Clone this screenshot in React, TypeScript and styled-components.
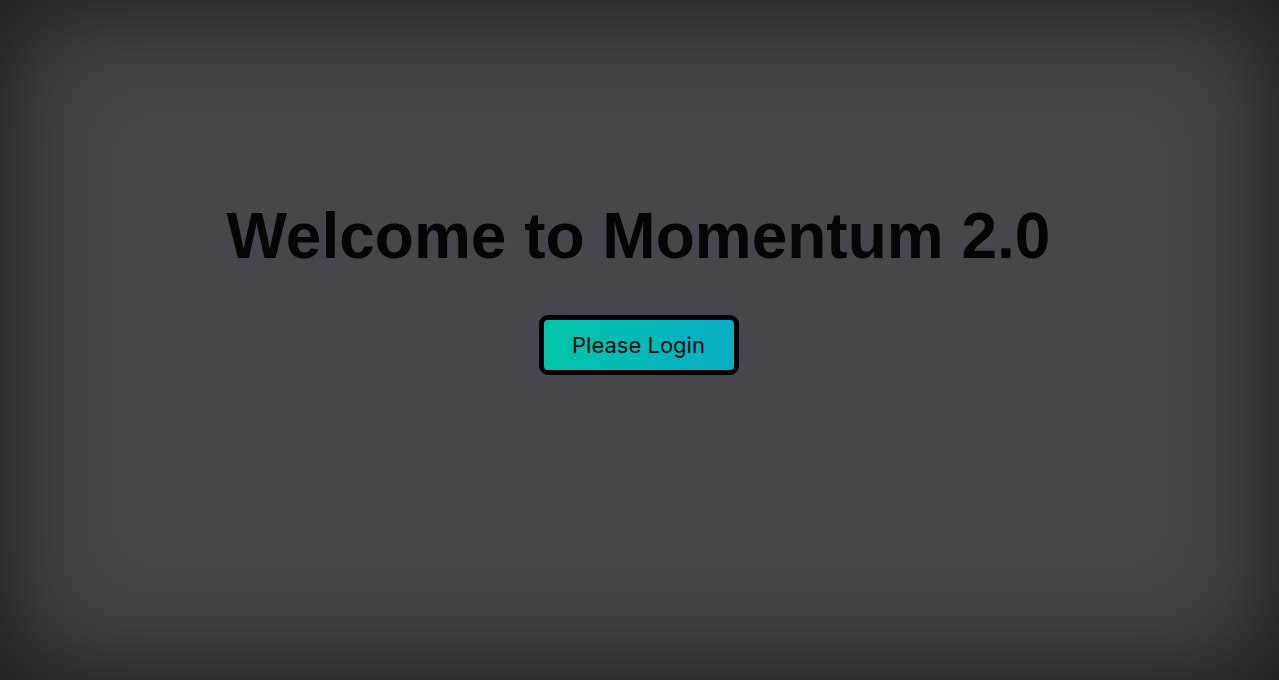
import React from "react";
import styled, { createGlobalStyle } from "styled-components";

const Global = createGlobalStyle`
  html, body { margin: 0; padding: 0; height: 100%; background: #45454b; }
  #root { height: 100%; }
`;

const Page = styled.main`
  box-sizing: border-box;
  height: 680px;
  background: #46464c;
  box-shadow: inset 0 0 120px rgba(0, 0, 0, 0.7);
  display: flex;
  flex-direction: column;
  align-items: center;
  padding-top: 199px;
  padding-right: 2px;
`;

const Title = styled.h1`
  margin: 0;
  font-family: "Liberation Sans", Arial, sans-serif;
  font-weight: 700;
  font-size: 64px;
  line-height: 74px;
  color: #050505;
`;

const LoginButton = styled.button`
  margin-top: 42px;
  width: 200px;
  height: 60px;
  box-sizing: border-box;
  border: 5px solid #000;
  border-radius: 9px;
  background: linear-gradient(90deg, #00c4a8 0%, #08aec6 100%);
  font-family: Inter, "Liberation Sans", sans-serif;
  font-size: 22px;
  color: #0a0a0a;
  cursor: pointer;
  padding: 0;
`;

export default function App() {
  return (
    <>
      <Global />
      <Page>
        <Title>Welcome to Momentum 2.0</Title>
        <LoginButton>Please Login</LoginButton>
      </Page>
    </>
  );
}
